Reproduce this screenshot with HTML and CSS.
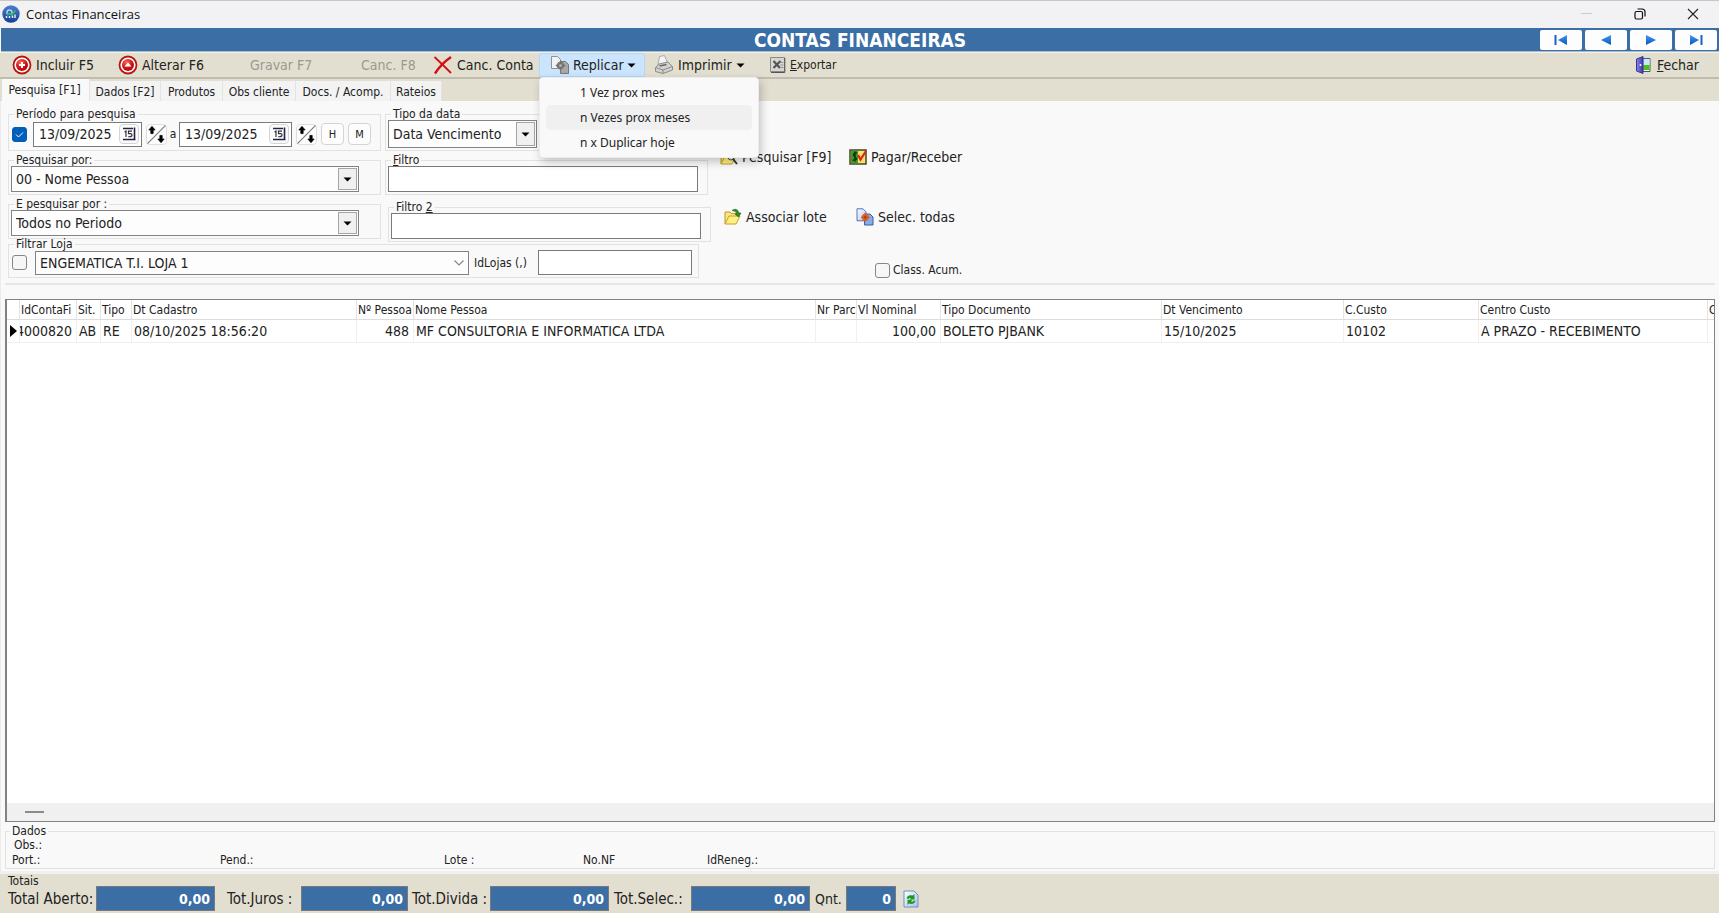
FILE: index.html
```html
<!DOCTYPE html>
<html lang="pt-BR">
<head>
<meta charset="utf-8">
<title>Contas Financeiras</title>
<link rel="stylesheet" href="styles.css">
</head>
<body>
<svg class="defs" width="0" height="0" aria-hidden="true">
  <defs>
    <radialGradient id="red" cx="40%" cy="30%"><stop offset="0" stop-color="#ff6a5c"/><stop offset="1" stop-color="#c40d0d"/></radialGradient>
    <linearGradient id="blue" x1="0" y1="0" x2="0" y2="1"><stop offset="0" stop-color="#3f9bf0"/><stop offset="1" stop-color="#0a55bd"/></linearGradient>
    <linearGradient id="door" x1="0" y1="0" x2="1" y2="0"><stop offset="0" stop-color="#8a86f0"/><stop offset="1" stop-color="#3b35a8"/></linearGradient>
    <linearGradient id="page" x1="0" y1="0" x2="1" y2="1"><stop offset="0" stop-color="#fff"/><stop offset="1" stop-color="#a9c2f0"/></linearGradient>
    <linearGradient id="globe" x1="0" y1="0" x2="0" y2="1"><stop offset="0" stop-color="#4b7fd0"/><stop offset="1" stop-color="#173f94"/></linearGradient>
    <symbol id="updown" viewBox="0 0 21 21">
      <path d="M20.500 .5L.5 20.500" stroke="#808080" stroke-width="1.300"/>
      <path d="M5.500 1.500l3.500 4H6.800v4H4.200v-4H2z" fill="#000" stroke="#000" stroke-width=".8"/>
      <path d="M15.500 19.500l3.500-4h-2.200v-4h-2.600v4H12z" fill="#000" stroke="#000" stroke-width=".8"/>
    </symbol>
    <symbol id="cal" viewBox="0 0 16 16">
      <path d="M2 2h12v12H2z" fill="#fff"/>
      <path d="M2 2.500h10M2 13.500h12.500M13.500 1.500V14" stroke="#22224a" stroke-width="1.600" fill="none"/>
      <path d="M3.500 6l1.500-1v6M11 5.200H7.500v2.500h2.300q1.400.200 1.200 1.700q-.2 1.500-3.700 1.300" stroke="#333" stroke-width="1.200" fill="none"/>
    </symbol>
    <symbol id="folder" viewBox="0 0 18 18">
      <path d="M1 16V4h5l1.500 1.500H13V8" fill="#f7e58a" stroke="#c09a1c"/>
      <path d="M1 16l4-8h11l-4 8z" fill="#ffef86" stroke="#c9a21f"/>
    </symbol>
  </defs>
</svg>

<div class="window">
  <header class="titlebar">
    <svg class="app-icon" viewBox="0 0 18 18"><circle cx="9" cy="9" r="8.700" fill="url(#globe)"/><path d="M5 9V7.500q0-2.500 2.500-2.500T10 7.500V9" fill="none" stroke="#b9d0f2" stroke-width="1.400"/><path d="M4.500 13V11M7.500 13v-2M10.500 13v-2.500M13 13V9.500" stroke="#dce8fa" stroke-width="1.500"/><path d="M5 10l2.500-1.500L9.500 10l4-4.500" fill="none" stroke="#2fbf5c" stroke-width="1.600"/></svg>
    <span class="window-name">Contas Financeiras</span>
    <button class="win-btn" aria-label="Minimizar" disabled><svg viewBox="0 0 12 12"><path d="M0 5.500h11" stroke="#ccc"/></svg></button>
    <button class="win-btn" aria-label="Restaurar"><svg viewBox="0 0 12 12"><rect x="1" y="3.500" width="7.500" height="7.500" rx="1.500" fill="none" stroke="#111" stroke-width="1.200"/><path d="M3.500 1h4.500q3 0 3 3v4.500" fill="none" stroke="#111" stroke-width="1.200"/></svg></button>
    <button class="win-btn" aria-label="Fechar janela"><svg viewBox="0 0 12 12"><path d="M1 1l10 10M11 1L1 11" stroke="#222" stroke-width="1.100"/></svg></button>
  </header>

  <div class="banner">
    <h1>CONTAS FINANCEIRAS</h1>
    <nav class="record-nav" aria-label="Registros">
      <button aria-label="Primeiro"><svg viewBox="0 0 14 10"><path d="M1.500 0v10" stroke="#1763c8" stroke-width="2"/><path d="M13 0v10L4 5z" fill="url(#blue)"/></svg></button>
      <button aria-label="Anterior"><svg viewBox="0 0 14 10"><path d="M12 0v10L2 5z" fill="url(#blue)"/></svg></button>
      <button aria-label="Próximo"><svg viewBox="0 0 14 10"><path d="M2 0v10l10-5z" fill="url(#blue)"/></svg></button>
      <button aria-label="Último"><svg viewBox="0 0 14 10"><path d="M12.500 0v10" stroke="#1763c8" stroke-width="2"/><path d="M1 0v10l9-5z" fill="url(#blue)"/></svg></button>
    </nav>
  </div>

  <div class="toolbar" role="toolbar" aria-label="Ações">
    <button class="tool tool-std"><svg class="ico20" viewBox="0 0 20 20"><circle cx="10" cy="10" r="8.500" fill="#fff" stroke="#b81414" stroke-width="1.800"/><circle cx="10" cy="10" r="6" fill="url(#red)"/><path d="M10 7v6M7 10h6" stroke="#fff" stroke-width="2"/></svg>Incluir F5</button>
    <button class="tool tool-std"><svg class="ico20" viewBox="0 0 20 20"><circle cx="10" cy="10" r="8.500" fill="#fff" stroke="#b81414" stroke-width="1.800"/><circle cx="10" cy="10" r="6" fill="url(#red)"/><path d="M6.500 11.500L10 7.500l3.500 4z" fill="#fff"/></svg>Alterar F6</button>
    <button class="tool tool-off" disabled>Gravar F7</button>
    <button class="tool tool-off" disabled>Canc. F8</button>
    <button class="tool tool-cancel"><svg class="ico20" viewBox="0 0 20 20"><path d="M1.500 2Q9 9 18 18" stroke="#d40f0f" stroke-width="1.800" fill="none"/><path d="M18 2Q8 9 2 18.500" stroke="#d40f0f" stroke-width="2.400" fill="none"/></svg>Canc. Conta</button>
    <div class="dropdown">
      <button class="tool tool-open" aria-expanded="true"><svg class="ico20" viewBox="0 0 20 20"><path d="M1.500 1.500h6l3 3v9h-9z" fill="#f2f2f2" stroke="#909090"/><path d="M10.500 6.500h5l3 3v9h-8z" fill="#a8a8a8" stroke="#777"/><circle cx="10.500" cy="10.500" r="3.800" fill="#7d7d7d"/><path d="M10.500 5.800v9.400M5.800 10.500h9.400" stroke="#707070" stroke-width="1.600"/><circle cx="10.500" cy="10.500" r="1.300" fill="#bbb"/></svg>Replicar<svg class="caret" viewBox="0 0 8 5"><path d="M0 .5h8L4 4.500z"/></svg></button>
      <div class="menu" role="menu">
        <button role="menuitem">1 Vez prox mes</button>
        <button role="menuitem" class="hover">n Vezes prox meses</button>
        <button role="menuitem">n x Duplicar hoje</button>
      </div>
    </div>
    <button class="tool tool-print"><svg class="ico20" viewBox="0 0 20 20"><path d="M4 10L5.500 1.500l5-1L14 9z" fill="#f4f4f4" stroke="#aaa"/><path d="M1.500 12.500L5 9l9-2 4.500 4.500V15L9 18.500l-7.500-2z" fill="#d2d2d0" stroke="#8c8c8c"/><path d="M1.500 12.500L9 15l9.500-3.500M9 15v3.500" fill="none" stroke="#8c8c8c"/><path d="M5.500 11l7-1.500" stroke="#666" stroke-width="1.500"/></svg>Imprimir<svg class="caret" viewBox="0 0 8 5"><path d="M0 .5h8L4 4.500z"/></svg></button>
    <button class="tool tool-export"><svg class="ico16" viewBox="0 0 16 16"><path d="M.5.500h14v14H.5z" fill="#d6d6d4" stroke="#8a8a88"/><path d="M14.800 1v14.500H1" fill="none" stroke="#555"/><path d="M3.500 4l6.500 7M10.500 4L3.500 11" fill="none" stroke="#555" stroke-width="2.200"/><path d="M10.500 5.500h3M10.500 8h3M10.500 10.500h3" stroke="#999"/></svg><span><u>E</u>xportar</span></button>
    <button class="tool tool-exit"><svg class="ico18" viewBox="0 0 18 18"><path d="M8 2.500h7v13H8z" fill="#fff" stroke="#555"/><path d="M8.500 3h6v6h-6z" fill="#c9e8fb"/><path d="M8.500 9h6v5h-6z" fill="#45c41c"/><path d="M1.500 3L8 .5v17L1.500 15z" fill="url(#door)" stroke="#39348f"/><circle cx="5.500" cy="9" r="1" fill="#fff"/></svg><span><u>F</u>echar</span></button>
  </div>

  <div class="tabs" role="tablist">
    <button role="tab" class="tab tab-1 active" aria-selected="true">Pesquisa [F1]</button>
    <button role="tab" class="tab tab-2">Dados [F2]</button>
    <button role="tab" class="tab tab-3">Produtos</button>
    <button role="tab" class="tab tab-4">Obs cliente</button>
    <button role="tab" class="tab tab-5">Docs. / Acomp.</button>
    <button role="tab" class="tab tab-6">Rateios</button>
  </div>

  <main class="page">
    <section class="filters">
      <div class="groups">
        <div class="group-cols">
          <div class="col col-a">
            <fieldset class="group">
              <legend>Período para pesquisa</legend>
              <div class="period">
                <input type="checkbox" class="check" checked aria-label="Usar período">
                <span class="date date-1"><input type="text" value="13/09/2025" aria-label="Data inicial"><button aria-label="Calendário"><svg viewBox="0 0 16 16"><use href="#cal"/></svg></button></span>
                <button class="spin" aria-label="Ajustar data inicial"><svg viewBox="0 0 21 21"><use href="#updown"/></svg></button>
                <span class="to">a</span>
                <span class="date date-2"><input type="text" value="13/09/2025" aria-label="Data final"><button aria-label="Calendário"><svg viewBox="0 0 16 16"><use href="#cal"/></svg></button></span>
                <button class="spin" aria-label="Ajustar data final"><svg viewBox="0 0 21 21"><use href="#updown"/></svg></button>
                <button class="key">H</button>
                <button class="key">M</button>
              </div>
            </fieldset>
            <fieldset class="group">
              <legend><label for="by1">Pesquisar por:</label></legend>
              <div class="combo combo-wide"><select id="by1"><option>00 - Nome Pessoa</option></select><span class="drop"><svg class="caret" viewBox="0 0 8 5"><path d="M0 .5h8L4 4.500z"/></svg></span></div>
            </fieldset>
            <fieldset class="group">
              <legend><label for="by2">E pesquisar por :</label></legend>
              <div class="combo combo-wide"><select id="by2"><option>Todos no Periodo</option></select><span class="drop"><svg class="caret" viewBox="0 0 8 5"><path d="M0 .5h8L4 4.500z"/></svg></span></div>
            </fieldset>
          </div>
          <div class="col col-b">
            <fieldset class="group">
              <legend><label for="kind">Tipo da data</label></legend>
              <div class="combo combo-kind"><select id="kind"><option>Data Vencimento</option></select><span class="drop"><svg class="caret" viewBox="0 0 8 5"><path d="M0 .5h8L4 4.500z"/></svg></span></div>
            </fieldset>
            <fieldset class="group">
              <legend><label for="f1"><u>F</u>iltro</label></legend>
              <input type="text" class="field" id="f1">
            </fieldset>
            <fieldset class="group group-last">
              <legend><label for="f2">Filtro <u>2</u></label></legend>
              <input type="text" class="field" id="f2">
            </fieldset>
          </div>
        </div>
        <fieldset class="group group-store">
          <legend>Filtrar Loja</legend>
          <div class="store">
            <input type="checkbox" class="check" aria-label="Filtrar por loja">
            <div class="combo combo-store"><select aria-label="Loja"><option>ENGEMATICA T.I. LOJA 1</option></select><svg class="chev" viewBox="0 0 10 6"><path d="M.5.500L5 5 9.500.500" fill="none" stroke="#888" stroke-width="1.200"/></svg></div>
            <label for="ids">IdLojas (,)</label>
            <input type="text" class="field ids" id="ids">
          </div>
        </fieldset>
      </div>

      <div class="actions">
        <button class="action act-search"><svg class="ico18" viewBox="0 0 18 18"><use href="#folder"/><circle cx="11" cy="9" r="3" fill="#e6f1fa" stroke="#555"/><path d="M13 11l4 5" stroke="#333" stroke-width="2"/></svg>Pesquisar [F9]</button>
        <button class="action"><svg class="ico18" viewBox="0 0 18 18"><path d="M1 2h16v14H1z" fill="#f3e36c" stroke="#44442a" stroke-width="1.500"/><path d="M2 3h7v12H2z" fill="#3f9c2c"/><path d="M8 5H5.500Q3.500 7 5.500 8.500t2 2.500q-.5 1.500-4 1M6 3.500v10" stroke="#0b3d08" stroke-width="1.500" fill="none"/><path d="M9 7l2.500 4.500L17 3" stroke="#e32319" stroke-width="2.200" fill="none"/></svg>Pagar/Receber</button>
        <button class="action act-lot"><svg class="ico18" viewBox="0 0 18 18"><use href="#folder"/><path d="M8 2.500Q13-1 15 5h2l-2.500 4L11 6h2Q12 2.500 8 2.500z" fill="#2c8a2c" stroke="#176317" stroke-width=".6"/></svg>Associar lote</button>
        <button class="action act-all"><svg class="ico18" viewBox="0 0 18 18"><path d="M1 .8h6l3 3v9H1z" fill="url(#page)" stroke="#5573b8"/><path d="M8.500 6H14l3 3v8H8.500z" fill="#86abe6" stroke="#3b5ca8"/><circle cx="9.300" cy="9.300" r="3.600" fill="#e0642a"/><path d="M9.300 5v8.600M5 9.300h8.600" stroke="#d9541c" stroke-width="1.300"/><circle cx="9.300" cy="9.300" r="1.400" fill="#a8400f"/></svg>Selec. todas</button>
        <label class="accum"><input type="checkbox" class="check">Class. Acum.</label>
      </div>
    </section>

    <section class="grid-panel">
      <div class="grid">
        <table>
          <colgroup><col class="c0"><col class="c1"><col class="c2"><col class="c3"><col class="c4"><col class="c5"><col class="c6"><col class="c7"><col class="c8"><col class="c9"><col class="c10"><col class="c11"><col class="c12"><col></colgroup>
          <thead><tr><th></th><th>IdContaFi</th><th>Sit.</th><th>Tipo</th><th>Dt Cadastro</th><th>Nº Pessoa</th><th>Nome Pessoa</th><th>Nr Parc</th><th>Vl Nominal</th><th>Tipo Documento</th><th>Dt Vencimento</th><th>C.Custo</th><th>Centro Custo</th><th>C</th></tr></thead>
          <tbody><tr><td class="marker"><svg viewBox="0 0 7 12"><path d="M0 0l7 6-7 6z"/></svg></td><td><div class="clip">4000820</div></td><td>AB</td><td>RE</td><td>08/10/2025 18:56:20</td><td class="num">488</td><td>MF CONSULTORIA E INFORMATICA LTDA</td><td></td><td class="num">100,00</td><td>BOLETO PJBANK</td><td>15/10/2025</td><td>10102</td><td>A PRAZO - RECEBIMENTO</td><td></td></tr></tbody>
        </table>
        <div class="scroll"><span class="thumb"></span></div>
      </div>
    </section>

    <fieldset class="group details">
      <legend>Dados</legend>
      <div class="obs">Obs.:</div>
      <div class="detail-row"><span>Port.:</span><span>Pend.:</span><span>Lote :</span><span>No.NF</span><span>IdReneg.:</span></div>
    </fieldset>
  </main>

  <footer class="totals">
    <div class="totals-title">Totais</div>
    <div class="totals-row">
      <label class="l1" for="t1">Total Aberto:</label><input type="text" class="sum s-wide" id="t1" value="0,00" readonly>
      <label class="l2" for="t2">Tot.Juros :</label><input type="text" class="sum s-mid" id="t2" value="0,00" readonly>
      <label class="l3" for="t3">Tot.Divida :</label><input type="text" class="sum s-wide" id="t3" value="0,00" readonly>
      <label class="l4" for="t4">Tot.Selec.:</label><input type="text" class="sum s-wide" id="t4" value="0,00" readonly>
      <label class="l5" for="t5">Qnt.</label><input type="text" class="sum s-small" id="t5" value="0" readonly>
      <button class="refresh" aria-label="Atualizar"><svg viewBox="0 0 16 18"><path d="M1 1h10l4 4v12H1z" fill="url(#page)" stroke="#6d8fc4"/><path d="M3.500 8.500q1-4.500 6.500-3L11.500 4V9.500H6.500L8 8Q6 7.500 5.500 9z" fill="#1d9a1d"/><path d="M12.500 10.500q-1 4.500-6.500 3L4.500 15V9.800H9.500L8 11.500q2.500.500 3-1z" fill="#1d9a1d"/></svg></button>
    </div>
  </footer>
</div>
</body>
</html>
```
FILE: styles.css
```css
* { box-sizing: border-box; }
body {
  margin: 0;
  font-family: "DejaVu Sans Condensed", "DejaVu Sans", sans-serif;
  font-size: 12px;
  color: #222;
}
button, input, select { font: inherit; color: inherit; }
button { padding: 0; border: 0; background: none; }
.defs { position: absolute; }
.window { display: flex; flex-direction: column; height: 100vh; background: #f9f9f9; }

.titlebar {
  display: flex; align-items: center; height: 28px; flex: none;
  padding: 0 0 2px 2px; background: #f2f2f5; border-top: 1px solid #c9c9c4;
}
.app-icon { width: 18px; height: 18px; }
.window-name { flex: 1; margin-left: 6px; font: 13px "Open Sans", sans-serif; color: #111; }
.win-btn { width: 53px; height: 25px; display: flex; align-items: center; justify-content: center; }
.win-btn svg { width: 12px; height: 12px; }

.banner {
  display: grid; grid-template-columns: 1fr auto 1fr; align-items: center;
  height: 24px; flex: none; margin-left: 1px; background: #3a6ea5; border-bottom: 1px solid #a9bccd;
}
.banner h1 { grid-column: 2; margin: 0; font: bold 19px/22px "DejaVu Sans Condensed", sans-serif; color: #fff; }
.record-nav { display: flex; justify-content: flex-end; gap: 3px; padding-right: 2px; }
.record-nav button { width: 42px; height: 20px; border-radius: 2px; background: #fdfdfd; display: flex; align-items: center; justify-content: center; }
.record-nav svg { width: 14px; height: 10px; }

.toolbar {
  display: flex; align-items: center; height: 27px; flex: none; padding-left: 2px;
  background: #e2dfd0; border-top: 1px solid #f3f1e8; border-bottom: 2px solid #c0bdae;
  font-size: 14px;
}
.tool { display: flex; align-items: center; gap: 4px; height: 24px; white-space: nowrap; }
.ico20 { width: 20px; height: 20px; flex: none; }
.ico18 { width: 18px; height: 18px; flex: none; }
.ico16 { width: 16px; height: 16px; flex: none; }
.caret { width: 9px; height: 5px; flex: none; fill: #000; }
.tool-std { width: 106px; padding-left: 10px; }
.tool-off { width: 111px; padding-left: 36px; color: #9b998f; }
.tool-off + .tool-off { width: 99px; }
.tool-cancel { width: 115px; padding-left: 9px; }
.dropdown { position: relative; z-index: 2; }
.tool-open { width: 106px; padding-left: 10px; gap: 3px; background: #cce5ff; border: 1px solid #b5d8f8; border-radius: 2px; }
.tool-print { width: 112px; padding-left: 9px; }
.tool-export { padding-left: 13px; font-size: 12px; }
.tool-exit { margin-left: auto; margin-right: 20px; }
.menu {
  position: absolute; top: 24px; left: 0; width: 220px; padding: 2px 6px;
  background: #f9f9f9; border: 1px solid #ececec; border-radius: 4px; box-shadow: 2px 4px 10px rgba(0,0,0,.22);
}
.menu button { display: block; width: 100%; height: 25px; padding: 0 0 1px 34px; text-align: left; border-radius: 4px; font: 12px "Noto Sans", sans-serif; }
.menu .hover { background: #f0f0f0; }

.tabs { display: flex; align-items: flex-end; height: 22px; flex: none; background: #e2dfd0; padding-left: 2px; }
.tab { height: 20px; padding-top: 1px; background: #f3f3f3; border-right: 1px solid #e3e3e3; white-space: nowrap; }
.tab.active { height: 22px; background: #f9f9f9; padding: 0 2px 1px 0; }
.tab-1 { width: 88px; }
.tab-2 { width: 71px; }
.tab-3 { width: 62px; }
.tab-4 { width: 73px; }
.tab-5 { width: 95px; }
.tab-6 { width: 51px; }

.page { flex: 1; min-height: 0; display: flex; flex-direction: column; padding: 7px 4px 2px 4px; border-left: 1px solid #ececec; border-bottom: 3px solid #f0f0f0; }
.group { margin: 0; padding: 0 2px 2px; border: 1px solid #e2e2e2; min-width: 0; }
.group legend { margin-left: 3px; padding: 0 2px; line-height: 12px; }
.filters { display: flex; align-items: flex-start; padding-left: 3px; }
.group-cols { display: flex; gap: 4px; }
.col { display: flex; flex-direction: column; gap: 3px; }
.col-a { width: 373px; }
.col-b { width: 323px; }
.group-last { margin: 3px -3px 0 3px; }
.group-store { width: 691px; margin-top: -4px; }
.period { display: flex; align-items: center; height: 28px; padding-left: 1px; }
.check {
  appearance: none; width: 15px; height: 15px; margin: 0; flex: none;
  border: 1px solid #868686; border-radius: 3px; background: #f6f6f6;
}
.check:checked {
  border-color: #005fb8;
  background: #005fb8 url("data:image/svg+xml,%3Csvg xmlns='http://www.w3.org/2000/svg' viewBox='0 0 13 13'%3E%3Cpath d='M3 6.500l2.500 2.500L10 4.500' fill='none' stroke='%23fff'/%3E%3C/svg%3E");
}
.date { display: flex; align-items: center; height: 25px; border: 1px solid #7a7a7a; background: #fff; font-size: 14px; }
.date input { flex: 1; min-width: 0; border: 0; padding: 0 0 0 5px; background: none; }
.date button { width: 20px; height: 20px; margin-right: 2px; border: 1px solid #d4d4d4; border-radius: 4px; background: #fbfbfb; }
.date svg { display: block; width: 16px; height: 16px; margin: 1px; }
.date-1 { width: 109px; margin-left: 6px; }
.date-2 { width: 113px; }
.spin { width: 21px; height: 21px; margin-left: 4px; border-radius: 4px; background: #fdfdfd; border: 1px solid #dedede; }
.spin svg { display: block; width: 19px; height: 19px; }
.to { width: 12px; text-align: center; }
.key { width: 23px; height: 22px; margin-left: 4px; border: 1px solid #d4d4d4; border-radius: 4px; background: #fdfdfd; font-size: 11px; }
.combo { position: relative; height: 26px; }
.combo select {
  appearance: none; width: 100%; height: 100%; padding: 0 4px; border: 1px solid #828282;
  border-radius: 0; background: #fdfdfd; font-size: 14px;
}
.drop { position: absolute; top: 2px; right: 2px; bottom: 2px; width: 19px; display: flex; align-items: center; justify-content: center; background: #f0f0f0; border: 1px solid #a5a5a5; pointer-events: none; }
.combo-wide { width: 348px; }
.combo-kind { width: 149px; height: 28px; }
.field { display: block; width: 310px; height: 26px; padding: 0 4px; border: 1px solid #7a7a7a; background: #fff; font-size: 14px; }
.store { display: flex; align-items: center; padding-left: 1px; }
.combo-store { width: 434px; height: 24px; margin: 0 5px 0 8px; }
.chev { position: absolute; top: 9px; right: 5px; width: 10px; height: 6px; pointer-events: none; }
.store label { width: 64px; }
.ids { width: 154px; height: 25px; }
.actions { display: grid; grid-template-columns: 129px 150px; row-gap: 40px; margin: 39px 0 0 12px; font-size: 14px; }
.action { display: flex; align-items: center; gap: 4px; height: 20px; white-space: nowrap; }
.act-lot { padding-left: 4px; }
.act-all { padding-left: 7px; }
.accum { grid-column: 2; display: flex; align-items: center; gap: 3px; height: 16px; margin: -5px 0 0 26px; font-size: 12px; white-space: nowrap; }

.grid-panel { flex: 1; min-height: 0; display: flex; flex-direction: column; margin-top: 5px; padding-top: 14px; border-top: 2px solid #e6e6e6; }
.grid { flex: 1; min-height: 0; display: flex; flex-direction: column; border: 1px solid #828282; border-left-width: 2px; background: #fff; }
.grid table { width: 100%; table-layout: fixed; border-collapse: separate; border-spacing: 0; }
.grid th { height: 20px; padding: 0 0 0 1px; border-right: 1px solid #e4e4e4; border-bottom: 1px solid #dcdcdc; font-weight: normal; text-align: left; overflow: hidden; white-space: nowrap; }
.grid td { height: 23px; padding: 0 4px 0 2px; border-right: 1px solid #efefef; border-bottom: 1px solid #efefef; overflow: hidden; white-space: nowrap; font-size: 14px; }
.grid th:last-child, .grid td:last-child { border-right: 0; }
.grid .num { text-align: right; }
.grid .marker { padding: 0 0 0 3px; }
.marker svg { display: block; width: 7px; height: 12px; }
.grid td:nth-child(2) { padding-left: 0; }
.grid td:nth-child(3), .grid td:nth-child(4) { padding-right: 0; }
.clip { display: flex; justify-content: flex-end; overflow: hidden; }
.c0 { width: 13px; } .c1 { width: 57px; } .c2 { width: 24px; } .c3 { width: 31px; } .c4 { width: 225px; }
.c5 { width: 57px; } .c6 { width: 402px; } .c7 { width: 41px; } .c8 { width: 84px; } .c9 { width: 221px; }
.c10 { width: 182px; } .c11 { width: 135px; } .c12 { width: 229px; }
.scroll { margin-top: auto; height: 18px; padding: 8px 0 0 18px; background: #f0f0f0; }
.thumb { display: block; width: 19px; height: 2px; background: #8a8a8a; }

.details { margin-top: 2px; padding: 0 2px; }
.details legend { margin-left: 2px; line-height: 14px; }
.obs { padding-left: 6px; line-height: 14px; }
.detail-row { display: grid; grid-template-columns: 208px 224px 139px 124px auto; padding-left: 4px; line-height: 16px; }

.totals { flex: none; background: #e2dfd0; padding: 2px 8px; }
.totals-title { line-height: 10px; }
.totals-row { display: flex; align-items: center; font-size: 15px; white-space: nowrap; }
.sum { height: 25px; padding: 0 4px; border: 1px solid #7a7a7a; background: #3a6ea5; color: #fff; font-size: 14px; font-weight: bold; text-align: right; }
.s-wide { width: 119px; }
.s-mid { width: 107px; }
.s-small { width: 50px; }
.l1 { width: 88px; }
.l2 { width: 86px; padding-left: 12px; }
.l3 { width: 82px; padding-left: 4px; }
.l4 { width: 82px; padding-left: 5px; }
.l5 { width: 36px; padding-left: 5px; font-size: 14px; }
.refresh { margin-left: 7px; }
.refresh svg { display: block; width: 16px; height: 18px; }
```
